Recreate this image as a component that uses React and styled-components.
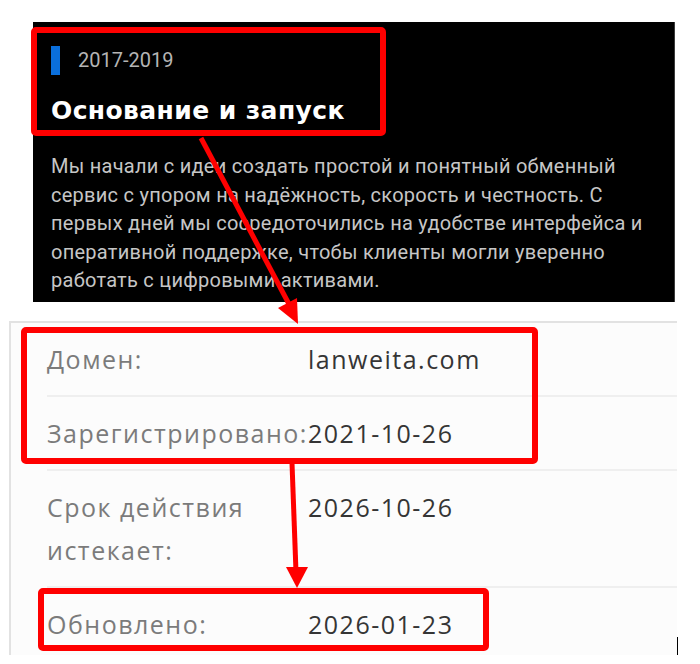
import React from "react";
import styled, { createGlobalStyle } from "styled-components";

const Global = createGlobalStyle`
  html, body { margin: 0; padding: 0; background: #ffffff; }
  * { box-sizing: border-box; }
`;

const Page = styled.div`
  position: relative;
  width: 700px;
  height: 664px;
  padding-top: 22px;
  overflow: hidden;
  background: #ffffff;
`;

const Timeline = styled.section`
  margin-left: 33px;
  width: 642px;
  height: 280px;
  padding: 24px 18px 0 18px;
  background: #000000;
  border-right: 1px solid #3c3c3c;
  display: flex;
  flex-direction: column;
`;

const Period = styled.div`
  display: flex;
  align-items: center;
  gap: 18px;
  height: 29px;
`;

const Marker = styled.span`
  width: 9px;
  height: 29px;
  background: #0a6fdc;
`;

const Years = styled.span`
  font-family: Roboto, "Liberation Sans", sans-serif;
  font-size: 20px;
  color: #b4b4b4;
  line-height: 29px;
`;

const Title = styled.h3`
  margin: 21px 0 0 0;
  font-family: "DejaVu Sans", Inter, sans-serif;
  font-weight: 700;
  font-size: 25px;
  letter-spacing: 0.4px;
  line-height: 30px;
  color: #ffffff;
`;

const Text = styled.p`
  margin: 26px 0 0 0;
  font-family: Roboto, "Liberation Sans", sans-serif;
  font-size: 20px;
  letter-spacing: 0.26px;
  line-height: 28.5px;
  color: #c6c6c6;
  white-space: nowrap;
`;

const Whois = styled.section`
  margin-top: 19px;
  margin-left: 9px;
  width: 668px;
  height: 334px;
  background: #fcfcfc;
  border-top: 2px solid #e2e2e2;
  border-left: 2px solid #e2e2e2;
  padding-left: 36px;
`;

const Row = styled.div`
  display: grid;
  grid-template-columns: 261px 1fr;
  padding: 14.5px 0;
  border-top: ${(p) => (p.$first ? "none" : "2px solid #efefef")};
  font-family: "Open Sans", "Noto Sans", sans-serif;
  font-size: 25px;
  letter-spacing: 1.5px;
  line-height: 43px;
`;

const Label = styled.span`
  color: #7b7b7b;
`;

const Value = styled.span`
  color: #353535;
`;

const Overlay = styled.svg`
  position: absolute;
  left: 0;
  top: 0;
  pointer-events: none;
`;

const rows = [
  ["Домен:", "lanweita.com"],
  ["Зарегистрировано:", "2021-10-26"],
  ["Срок действия истекает:", "2026-10-26"],
  ["Обновлено:", "2026-01-23"],
];

export default function App() {
  return (
    <>
      <Global />
      <Page>
        <Timeline>
          <Period>
            <Marker />
            <Years>2017-2019</Years>
          </Period>
          <Title>Основание и запуск</Title>
          <Text>
            Мы начали с идеи создать простой и понятный обменный
            <br />
            сервис с упором на надёжность, скорость и честность. С
            <br />
            первых дней мы сосредоточились на удобстве интерфейса и
            <br />
            оперативной поддержке, чтобы клиенты могли уверенно
            <br />
            работать с цифровыми активами.
          </Text>
        </Timeline>
        <Whois>
          {rows.map(([l, v], i) => (
            <Row key={l} $first={i === 0}>
              <Label>{l}</Label>
              <Value>{v}</Value>
            </Row>
          ))}
        </Whois>
        <Overlay width="700" height="664" viewBox="0 0 700 664">
          <g fill="none" stroke="#ff0000" strokeWidth="6" strokeLinejoin="round">
            <rect x="34" y="30" width="349" height="103" rx="2" />
            <rect x="24" y="330" width="511" height="131" rx="2" />
            <rect x="41" y="591" width="445" height="57" rx="2" />
          </g>
          <g stroke="#ff0000" strokeWidth="5" strokeLinecap="butt">
            <line x1="201" y1="138" x2="290" y2="306" />
            <line x1="292" y1="463" x2="296" y2="572" />
          </g>
          <g fill="#ff0000">
            <polygon points="298,324 278,308 297,298" />
            <polygon points="297,588 286,567 308,567" />
          </g>
          <line x1="677.5" y1="637" x2="677.5" y2="655" stroke="#000" strokeWidth="1" />
        </Overlay>
      </Page>
    </>
  );
}
